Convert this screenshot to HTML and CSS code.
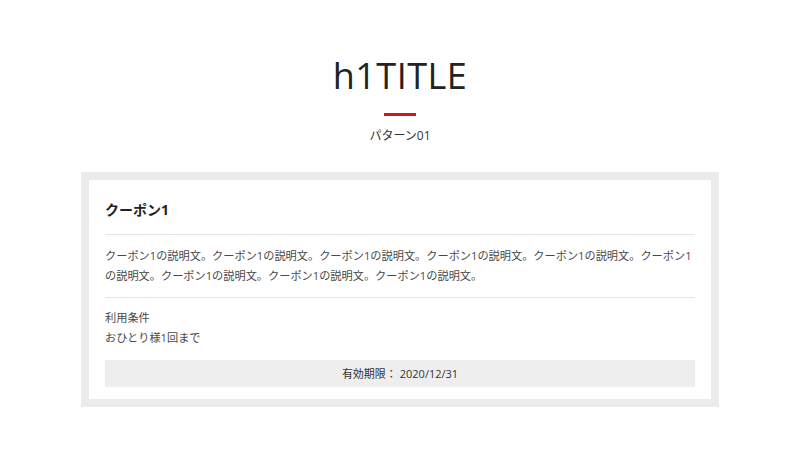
FILE: index.html
```html
<!DOCTYPE html>
<html lang="ja">
<head>
  <meta charset="UTF-8" />
  <meta name="viewport" content="width=device-width, initial-scale=1.0"/>
  <title>h1TITLE</title>
  <link rel="stylesheet" href="styles.css">
</head>
<body>

  <div class="page-head">
    <h1 class="page-title">h1TITLE</h1>
    <span class="title-bar"></span>
    <p class="page-sub">パターン01</p>
  </div>

  <div class="coupon">
    <div class="coupon-inner">
      <h2 class="coupon-name">クーポン1</h2>
      <p class="coupon-desc">クーポン1の説明文。クーポン1の説明文。クーポン1の説明文。クーポン1の説明文。クーポン1の説明文。クーポン1の説明文。クーポン1の説明文。クーポン1の説明文。クーポン1の説明文。</p>
      <div class="coupon-terms">
        <span class="terms-label">利用条件</span>
        <span class="terms-text">おひとり様1回まで</span>
      </div>
      <div class="coupon-limit">有効期限： 2020/12/31</div>
    </div>
  </div>

</body>
</html>
```

FILE: styles.css
```css
body {
  margin: 0;
  font-family: 'Open Sans', 'Noto Sans CJK JP', sans-serif;
  background: #ffffff;
  color: #333333;
  padding-top: 54px;
}

.page-head {
  display: flex;
  flex-direction: column;
  align-items: center;
}

.page-title {
  margin: 0;
  font-size: 36px;
  line-height: 43px;
  font-weight: 400;
  letter-spacing: 0.5px;
  color: #222222;
}

.title-bar {
  display: block;
  width: 32px;
  height: 3px;
  margin-top: 16px;
  background: #cc1820;
}

.page-sub {
  margin: 11px 0 0;
  font-size: 12px;
  line-height: 18px;
  color: #333333;
}

.coupon {
  width: 622px;
  margin: 27px auto 0;
  border: 8px solid #ebebeb;
  background: #ffffff;
}

.coupon-inner {
  padding: 0 16px 12px;
}

.coupon-name {
  margin: 0;
  padding: 20px 0 14px;
  font-size: 14px;
  line-height: 20px;
  font-weight: bold;
  color: #222222;
  border-bottom: 1px solid #e6e6e6;
}

.coupon-desc {
  margin: 0;
  padding: 11px 0;
  font-size: 11.2px;
  line-height: 20px;
  color: #484848;
  border-bottom: 1px solid #e6e6e6;
}

.coupon-terms {
  display: flex;
  flex-direction: column;
  padding-top: 10px;
  font-size: 11.2px;
  line-height: 20px;
  color: #484848;
}

.coupon-limit {
  margin-top: 12px;
  height: 27px;
  line-height: 27px;
  text-align: center;
  background: #eeeeee;
  font-size: 11px;
  color: #333333;
}
```
